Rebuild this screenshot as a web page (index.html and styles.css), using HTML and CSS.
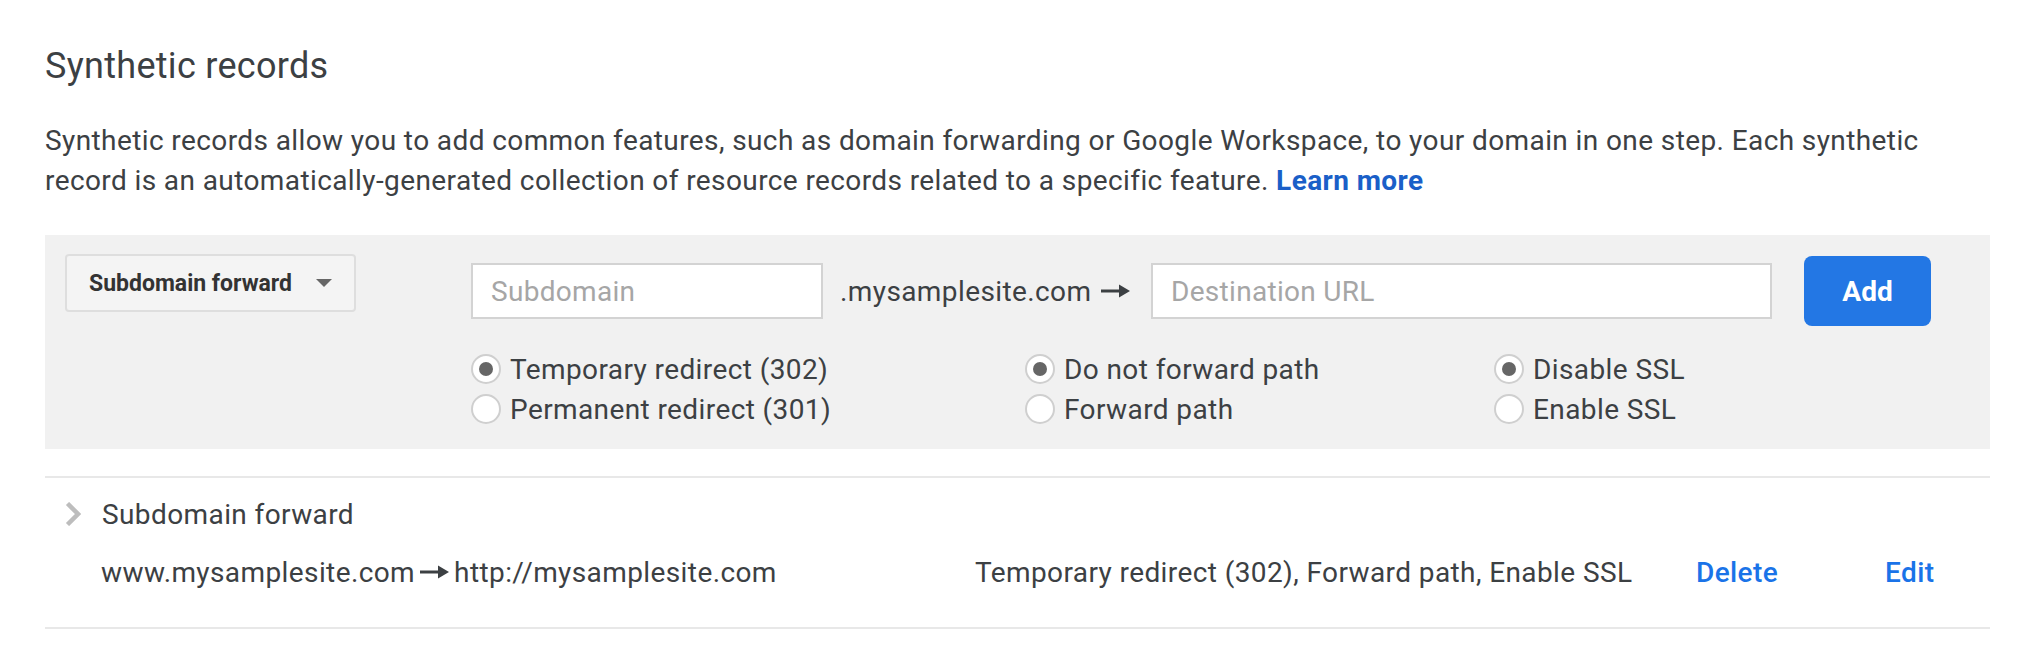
FILE: index.html
```html
<!DOCTYPE html>
<html lang="en">
<head>
<meta charset="utf-8">
<title>Synthetic records</title>
<link rel="stylesheet" href="styles.css">
</head>
<body>
<div class="page">
  <h2 class="title">Synthetic records</h2>
  <p class="intro">Synthetic records allow you to add common features, such as domain forwarding or Google Workspace, to your domain in one step. Each synthetic record is an automatically-generated collection of resource records related to a specific feature. <a class="link" href="#">Learn more</a></p>

  <div class="panel">
    <div class="type-col">
      <button class="select">Subdomain forward<span class="caret"></span></button>
    </div>
    <div class="form">
      <div class="input-row">
        <input class="field field-sub" type="text" placeholder="Subdomain">
        <span class="suffix">.mysamplesite.com<svg class="arrow-icon suffix-arrow" width="30" height="16" viewBox="0 0 30 16"><path d="M0 8 H20" stroke="#3c4043" stroke-width="3"/><path d="M18 1.5 L29 8 L18 14.5 Z" fill="#3c4043"/></svg></span>
        <input class="field field-dest" type="text" placeholder="Destination URL">
        <button class="add">Add</button>
      </div>
      <div class="options">
        <div class="group group-1">
          <label class="radio"><span class="dot dot-on"></span>Temporary redirect (302)</label>
          <label class="radio"><span class="dot"></span>Permanent redirect (301)</label>
        </div>
        <div class="group group-2">
          <label class="radio"><span class="dot dot-on"></span>Do not forward path</label>
          <label class="radio"><span class="dot"></span>Forward path</label>
        </div>
        <div class="group group-3">
          <label class="radio"><span class="dot dot-on"></span>Disable SSL</label>
          <label class="radio"><span class="dot"></span>Enable SSL</label>
        </div>
      </div>
    </div>
  </div>

  <div class="record">
    <div class="rec-head">
      <svg class="chev" width="16" height="24" viewBox="0 0 16 24"><path d="M2.5 1.5 L13 12 L2.5 22.5" fill="none" stroke="#bdbdbd" stroke-width="4.5"/></svg>
      <span>Subdomain forward</span>
    </div>
    <div class="rec-line">
      <span class="rec-url">www.mysamplesite.com<svg class="arrow-icon rec-arrow" width="30" height="16" viewBox="0 0 30 16"><path d="M0 8 H20" stroke="#3c4043" stroke-width="3"/><path d="M18 1.5 L29 8 L18 14.5 Z" fill="#3c4043"/></svg>http://mysamplesite.com</span>
      <span class="rec-opts">Temporary redirect (302), Forward path, Enable SSL</span>
      <a class="action" href="#">Delete</a>
      <a class="action" href="#">Edit</a>
    </div>
  </div>
</div>
</body>
</html>
```

FILE: styles.css
```css
html, body {
  margin: 0;
  padding: 0;
  background: #ffffff;
}

body {
  font-family: Roboto, "Liberation Sans", Arial, sans-serif;
  color: #3c4043;
}

.page {
  width: 1945px;
  padding-left: 45px;
  padding-top: 42px;
}

.title {
  margin: 0;
  font-size: 36px;
  line-height: 48px;
  font-weight: 400;
  letter-spacing: 0.3px;
  color: #3c4043;
}

.intro {
  margin: 31px 0 0 0;
  font-size: 28px;
  line-height: 40px;
  letter-spacing: 0.4px;
  color: #3c4043;
}

.link {
  color: #1a5fc8;
  font-weight: 700;
  text-decoration: none;
}

.panel {
  margin-top: 34px;
  background: #f1f1f1;
  display: flex;
  padding: 19px 0 20px 20px;
}

.type-col {
  width: 406px;
  flex: none;
}

.select {
  width: 291px;
  height: 58px;
  box-sizing: border-box;
  border: 2px solid #dedede;
  border-radius: 4px;
  background: #f4f4f4;
  font-family: Roboto, "Liberation Sans", Arial, sans-serif;
  font-size: 23px;
  font-weight: 700;
  color: #333333;
  display: flex;
  align-items: center;
  padding: 0 0 0 22px;
  margin-top: 0;
}

.caret {
  display: inline-block;
  width: 0;
  height: 0;
  border-left: 8px solid transparent;
  border-right: 8px solid transparent;
  border-top: 8px solid #666666;
  margin-left: 24px;
}

.form {
  display: flex;
  flex-direction: column;
}

.input-row {
  display: flex;
  align-items: center;
  height: 70px;
  margin-top: 2px;
}

.field {
  height: 56px;
  box-sizing: border-box;
  border: 2px solid #d3d3d3;
  background: #ffffff;
  font-family: Roboto, "Liberation Sans", Arial, sans-serif;
  font-size: 28px;
  letter-spacing: 0.3px;
  color: #3c4043;
  padding: 0 18px;
  outline: none;
  margin: 0;
}

.field::placeholder {
  color: #a6a6a6;
}

.field-sub {
  width: 352px;
}

.suffix {
  margin-left: 17px;
  width: 311px;
  font-size: 28px;
  letter-spacing: 0.4px;
  color: #3c4043;
  white-space: nowrap;
  display: flex;
  align-items: center;
}

.arrow-icon {
  flex: none;
}

.suffix-arrow {
  margin-left: 10px;
}

.field-dest {
  width: 621px;
}

.add {
  margin-left: 32px;
  width: 127px;
  height: 70px;
  border: none;
  border-radius: 8px;
  background: #2377e4;
  color: #ffffff;
  font-family: Roboto, "Liberation Sans", Arial, sans-serif;
  font-size: 28px;
  font-weight: 700;
}

.options {
  display: flex;
  margin-top: 23px;
}

.group {
  display: flex;
  flex-direction: column;
}

.group-1 {
  width: 554px;
}

.group-2 {
  width: 469px;
}

.radio {
  display: flex;
  align-items: center;
  height: 40px;
  font-size: 28px;
  letter-spacing: 0.4px;
  color: #3c4043;
}

.dot {
  width: 30px;
  height: 30px;
  box-sizing: border-box;
  border: 2px solid #cfcfcf;
  border-radius: 50%;
  background: #ffffff;
  margin-right: 9px;
  display: flex;
  align-items: center;
  justify-content: center;
  flex: none;
}

.dot-on::after {
  content: "";
  width: 14px;
  height: 14px;
  border-radius: 50%;
  background: #666666;
}

.record {
  margin-top: 27px;
  border-top: 2px solid #e8e8e8;
  border-bottom: 2px solid #e8e8e8;
  padding: 16px 0 35px 0;
}

.rec-head {
  display: flex;
  align-items: center;
  height: 40px;
  padding-left: 20px;
  font-size: 28px;
  letter-spacing: 0.4px;
  color: #3c4043;
}

.chev {
  margin-right: 21px;
  flex: none;
}

.rec-line {
  display: grid;
  grid-template-columns: 874px 721px 189px auto;
  align-items: center;
  height: 40px;
  margin-top: 18px;
  padding-left: 56px;
  font-size: 28px;
  letter-spacing: 0.4px;
  color: #3c4043;
}

.rec-url {
  display: flex;
  align-items: center;
}

.rec-arrow {
  margin: 0 4px 0 5px;
}

.action {
  color: #1a73e8;
  font-weight: 500;
  text-decoration: none;
}
```
